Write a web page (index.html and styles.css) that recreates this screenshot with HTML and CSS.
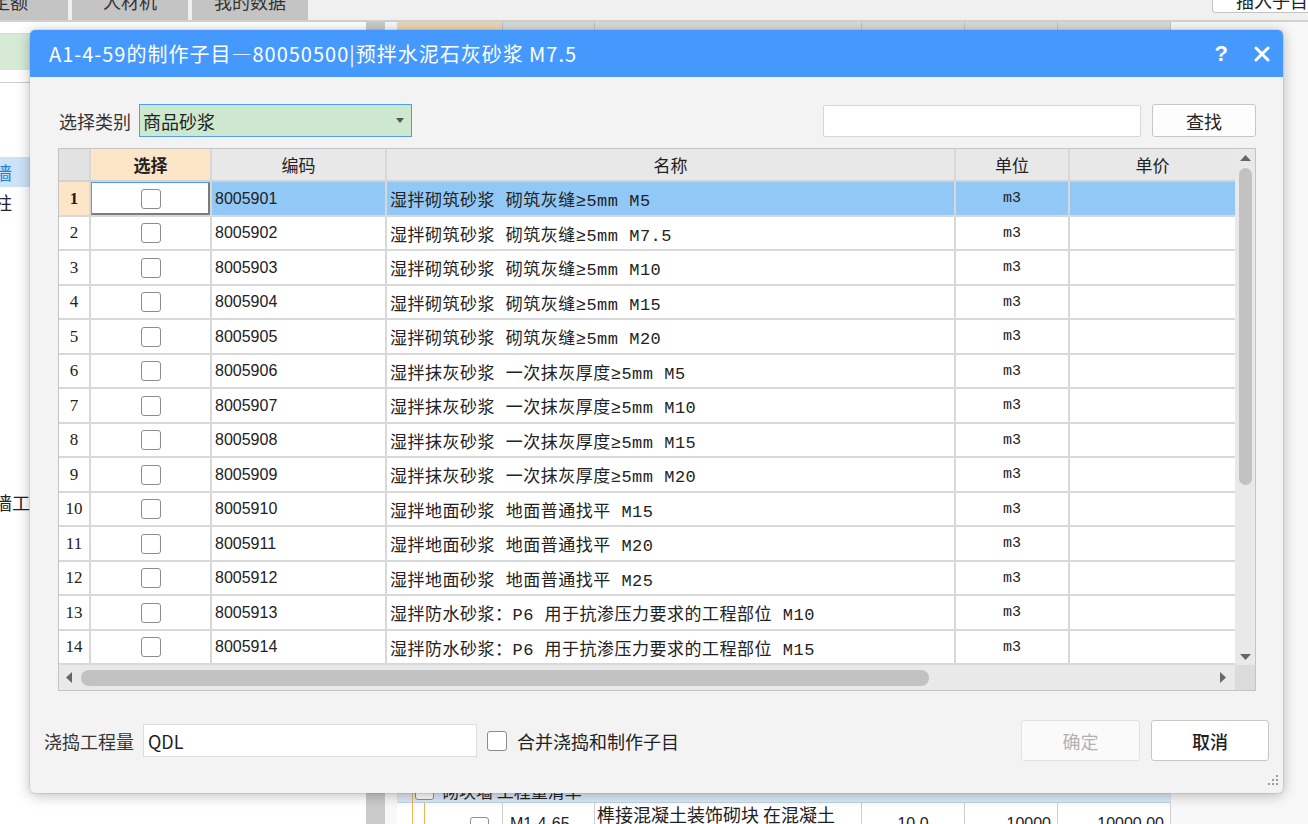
FILE: index.html
```html
<!DOCTYPE html>
<html lang="zh-CN">
<head>
<meta charset="utf-8">
<title>制作子目</title>
<link rel="stylesheet" href="styles.css">
</head>
<body>
<div class="app">
  <div class="tabbar">
    <div class="tab tab-first">定额</div>
    <div class="tab">人材机</div>
    <div class="tab">我的数据</div>
    <div class="insert-btn">插入子目</div>
  </div>
  <div class="main">
    <aside class="left-panel">
      <div class="lp-head"></div>
      <div class="lp-green"></div>
      <div class="lp-tool"></div>
      <ul class="tree">
        <li class="sub"></li>
        <li class="sub"></li>
        <li class="top sel">墙</li>
        <li class="top">柱</li>
        <li class="sub"></li>
        <li class="sub"></li>
        <li class="sub"></li>
        <li class="sub"></li>
        <li class="sub"></li>
        <li class="sub"></li>
        <li class="sub"></li>
        <li class="sub"></li>
        <li class="sub"></li>
        <li class="top">墙工程</li>
      </ul>
    </aside>
    <div class="splitter"></div>
    <section class="right-panel">
      <div class="rp-head">
        <span class="h-first"></span><span></span><span></span><span></span><span></span><span></span>
      </div>
      <div class="rp-filler"></div>
      <div class="rp-group">
        <span class="tline"></span>
        <span class="mini-cb"></span>
        <span class="grp-text">砌块墙 工程量清单</span>
      </div>
      <div class="rp-row">
        <span class="rc rc-tree"><i class="oline"></i><i class="oline second"></i><span class="mini-cb low"></span></span>
        <span class="rc rc-code">M1-4-65</span>
        <span class="rc rc-name">榫接混凝土装饰砌块 在混凝土 砌块墙面上</span>
        <span class="rc rc-num center">10.0</span>
        <span class="rc rc-num">10000</span>
        <span class="rc rc-num">10000.00</span>
      </div>
    </section>
  </div>
</div>

<div class="dialog">
  <div class="dlg-title">
    <h1>A1-4-59的制作子目—80050500|预拌水泥石灰砂浆 M7.5</h1>
    <span class="help">?</span>
    <svg class="close" width="16" height="16" viewBox="0 0 16 16"><path d="M2 2 L14 14 M14 2 L2 14" stroke="#fff" stroke-width="3" stroke-linecap="round"/></svg>
  </div>

  <div class="dlg-body">
    <div class="filter">
      <span class="flabel">选择类别</span>
      <div class="select"><span class="sel-txt">商品砂浆</span><svg width="8" height="5" viewBox="0 0 8 5"><polygon points="0,0 8,0 4,5" fill="#555"/></svg></div>
      <div class="search"></div>
      <div class="btn btn-find">查找</div>
    </div>

    <div class="grid">
      <div class="grid-main">
        <div class="grid-table">
          <div class="row head">
            <div class="c num"></div>
            <div class="c chk hl">选择</div>
            <div class="c ctr">编码</div>
            <div class="c ctr">名称</div>
            <div class="c ctr">单位</div>
            <div class="c ctr last">单价</div>
          </div>
          <div class="row sel">
            <div class="c num">1</div>
            <div class="c chk"><span class="cb"></span></div>
            <div class="c code">8005901</div>
            <div class="c name">湿拌砌筑砂浆 砌筑灰缝≥5mm M5</div>
            <div class="c unit">m3</div>
            <div class="c price last"></div>
          </div>
          <div class="row">
            <div class="c num">2</div>
            <div class="c chk"><span class="cb"></span></div>
            <div class="c code">8005902</div>
            <div class="c name">湿拌砌筑砂浆 砌筑灰缝≥5mm M7.5</div>
            <div class="c unit">m3</div>
            <div class="c price last"></div>
          </div>
          <div class="row">
            <div class="c num">3</div>
            <div class="c chk"><span class="cb"></span></div>
            <div class="c code">8005903</div>
            <div class="c name">湿拌砌筑砂浆 砌筑灰缝≥5mm M10</div>
            <div class="c unit">m3</div>
            <div class="c price last"></div>
          </div>
          <div class="row">
            <div class="c num">4</div>
            <div class="c chk"><span class="cb"></span></div>
            <div class="c code">8005904</div>
            <div class="c name">湿拌砌筑砂浆 砌筑灰缝≥5mm M15</div>
            <div class="c unit">m3</div>
            <div class="c price last"></div>
          </div>
          <div class="row">
            <div class="c num">5</div>
            <div class="c chk"><span class="cb"></span></div>
            <div class="c code">8005905</div>
            <div class="c name">湿拌砌筑砂浆 砌筑灰缝≥5mm M20</div>
            <div class="c unit">m3</div>
            <div class="c price last"></div>
          </div>
          <div class="row">
            <div class="c num">6</div>
            <div class="c chk"><span class="cb"></span></div>
            <div class="c code">8005906</div>
            <div class="c name">湿拌抹灰砂浆 一次抹灰厚度≥5mm M5</div>
            <div class="c unit">m3</div>
            <div class="c price last"></div>
          </div>
          <div class="row">
            <div class="c num">7</div>
            <div class="c chk"><span class="cb"></span></div>
            <div class="c code">8005907</div>
            <div class="c name">湿拌抹灰砂浆 一次抹灰厚度≥5mm M10</div>
            <div class="c unit">m3</div>
            <div class="c price last"></div>
          </div>
          <div class="row">
            <div class="c num">8</div>
            <div class="c chk"><span class="cb"></span></div>
            <div class="c code">8005908</div>
            <div class="c name">湿拌抹灰砂浆 一次抹灰厚度≥5mm M15</div>
            <div class="c unit">m3</div>
            <div class="c price last"></div>
          </div>
          <div class="row">
            <div class="c num">9</div>
            <div class="c chk"><span class="cb"></span></div>
            <div class="c code">8005909</div>
            <div class="c name">湿拌抹灰砂浆 一次抹灰厚度≥5mm M20</div>
            <div class="c unit">m3</div>
            <div class="c price last"></div>
          </div>
          <div class="row">
            <div class="c num">10</div>
            <div class="c chk"><span class="cb"></span></div>
            <div class="c code">8005910</div>
            <div class="c name">湿拌地面砂浆 地面普通找平 M15</div>
            <div class="c unit">m3</div>
            <div class="c price last"></div>
          </div>
          <div class="row">
            <div class="c num">11</div>
            <div class="c chk"><span class="cb"></span></div>
            <div class="c code">8005911</div>
            <div class="c name">湿拌地面砂浆 地面普通找平 M20</div>
            <div class="c unit">m3</div>
            <div class="c price last"></div>
          </div>
          <div class="row">
            <div class="c num">12</div>
            <div class="c chk"><span class="cb"></span></div>
            <div class="c code">8005912</div>
            <div class="c name">湿拌地面砂浆 地面普通找平 M25</div>
            <div class="c unit">m3</div>
            <div class="c price last"></div>
          </div>
          <div class="row">
            <div class="c num">13</div>
            <div class="c chk"><span class="cb"></span></div>
            <div class="c code">8005913</div>
            <div class="c name">湿拌防水砂浆：P6 用于抗渗压力要求的工程部位 M10</div>
            <div class="c unit">m3</div>
            <div class="c price last"></div>
          </div>
          <div class="row">
            <div class="c num">14</div>
            <div class="c chk"><span class="cb"></span></div>
            <div class="c code">8005914</div>
            <div class="c name">湿拌防水砂浆：P6 用于抗渗压力要求的工程部位 M15</div>
            <div class="c unit">m3</div>
            <div class="c price last"></div>
          </div>
        </div>
        <div class="vscroll">
          <div class="arr"><svg width="11" height="6" viewBox="0 0 11 6"><polygon points="0,6 11,6 5.5,0" fill="#666"/></svg></div>
          <div class="vthumb"></div>
          <div class="spacer"></div>
          <div class="arr"><svg width="11" height="6" viewBox="0 0 11 6"><polygon points="0,0 11,0 5.5,6" fill="#666"/></svg></div>
        </div>
      </div>
      <div class="hscroll">
        <div class="harr"><svg width="6" height="11" viewBox="0 0 6 11"><polygon points="6,0 6,11 0,5.5" fill="#666"/></svg></div>
        <div class="hthumb"></div>
        <div class="spacer"></div>
        <div class="harr"><svg width="6" height="11" viewBox="0 0 6 11"><polygon points="0,0 0,11 6,5.5" fill="#666"/></svg></div>
        <div class="corner"></div>
      </div>
    </div>
  </div>

  <div class="dlg-footer">
    <span class="qlabel">浇捣工程量</span>
    <div class="qdl">QDL</div>
    <span class="fcb"></span>
    <span class="merge">合并浇捣和制作子目</span>
    <div class="btn btn-ok">确定</div>
    <div class="btn btn-cancel">取消</div>
  </div>

  <svg class="grip" width="10" height="10" viewBox="0 0 10 10">
    <rect x="8" y="0" width="2" height="2" fill="#9a9a9a"/>
    <rect x="4" y="4" width="2" height="2" fill="#9a9a9a"/>
    <rect x="8" y="4" width="2" height="2" fill="#9a9a9a"/>
    <rect x="0" y="8" width="2" height="2" fill="#9a9a9a"/>
    <rect x="4" y="8" width="2" height="2" fill="#9a9a9a"/>
    <rect x="8" y="8" width="2" height="2" fill="#9a9a9a"/>
  </svg>
</div>
</body>
</html>
```
FILE: styles.css
```css
* { box-sizing: border-box; margin: 0; padding: 0; }
html, body { width: 1308px; height: 824px; overflow: hidden; }
body {
  position: relative;
  background: #fff;
  font-family: "Noto Sans CJK SC", "Noto Sans", sans-serif;
  color: #222;
}

/* ---------- background application ---------- */
.app { display: flex; flex-direction: column; height: 824px; }
.tabbar {
  height: 22px; flex: none; display: flex;
  background: #f0f0f0; border-bottom: 2px solid #d2d2d2; overflow: hidden;
}
.tab {
  flex: none; width: 116px; height: 20px; margin-right: 4px;
  background: #c4c4c4; font-size: 18px; line-height: 2px;
  text-align: center; color: #333; white-space: nowrap;
}
.tab-first { margin-left: -48px; }
.insert-btn {
  flex: none; margin-left: auto; margin-right: -14px;
  width: 110px; height: 13px; background: #fff;
  border: 1px solid #c3c3c3; border-top: none; border-radius: 0 0 4px 4px;
  font-size: 18px; line-height: 0; padding-left: 23px; color: #222; white-space: nowrap;
}
.main { flex: 1; display: flex; min-height: 0; }
.left-panel {
  width: 366px; flex: none; background: #fff;
  display: flex; flex-direction: column; overflow: hidden;
}
.lp-head { height: 12px; flex: none; border-bottom: 1px solid #d8d8d8; }
.lp-green { height: 36px; flex: none; background: #d6ead6; }
.lp-tool { height: 13px; flex: none; border-bottom: 1px solid #cfcfcf; }
.tree { list-style: none; padding-top: 14px; }
.tree li { height: 30px; line-height: 30px; font-size: 18px; white-space: nowrap; }
.tree .top { text-indent: -6px; }
.tree .sub { padding-left: 70px; }
.tree .sel { background: #cde4f8; color: #1d7fd7; }

.splitter { width: 19px; flex: none; background: #cbcbcb; }
.right-panel {
  flex: 1; min-width: 0; display: flex; flex-direction: column;
  padding-left: 12px; background: #f8f8f8; overflow: hidden;
}
.rp-head, .rp-row {
  display: grid; flex: none; width: 774px;
  grid-template-columns: 106px 92px 267px 103px 93px 113px;
}
.rp-head { height: 24px; background: #dadada; }
.rp-head span { border-right: 1px solid #c2c2c2; }
.rp-head .h-first { background: #ecd7b8; }
.rp-filler { height: 732px; flex: none; width: 774px; background: #fff; }
.rp-group {
  height: 25px; width: 774px; flex: none; display: flex; align-items: center;
  background: #dceaf7; border-bottom: 1px solid #bed3e6;
}
.tline { width: 1px; height: 25px; background: #f1b25a; margin-left: 15px; }
.mini-cb {
  width: 19px; height: 19px; border: 1px solid #8f8f8f; border-radius: 3px;
  background: #fff; margin-left: 2px; flex: none;
}
.grp-text { margin-left: 8px; font-size: 17px; }
.rp-row { height: 50px; background: #fff; border-bottom: 1px solid #d0d0d0; }
.rc {
  border-right: 1px solid #d0d0d0; overflow: hidden;
  font-size: 16px; font-family: "Liberation Sans", "Noto Sans CJK SC", sans-serif;
  display: flex; align-items: center;
}
.rc-tree { align-items: flex-start; }
.oline { display: block; width: 1px; height: 50px; background: #f1b25a; margin-left: 15px; }
.oline.second { margin-left: 11px; }
.mini-cb.low { margin-left: 45px; margin-top: 14px; }
.rc-code { padding-left: 7px; padding-bottom: 8px; }
.rc-name {
  display: block; font-family: "Noto Sans CJK SC", sans-serif; font-size: 18px;
  line-height: 21px; padding: 1px 12px 0 2px;
}
.rc-num { justify-content: flex-end; padding-right: 6px; padding-bottom: 8px; }
.rc-num.center { justify-content: center; padding-right: 0; }

/* ---------- dialog ---------- */
.dialog {
  position: absolute; left: 30px; top: 30px; width: 1253px; height: 763px;
  background: #f3f3f3; border-radius: 5px;
  box-shadow: 0 0 0 1px rgba(0,0,0,.07), 0 2px 14px rgba(0,0,0,.28);
  display: flex; flex-direction: column;
}
.dlg-title {
  height: 47px; flex: none; background: #4599fd; border-radius: 5px 5px 0 0;
  display: flex; align-items: center; padding: 0 13px 0 19px; color: #fff;
}
.dlg-title h1 {
  flex: 1; font-size: 20px; font-weight: 400; letter-spacing: 1px; white-space: nowrap;
}
.help {
  font-family: "Liberation Sans", sans-serif; font-size: 22px; font-weight: 700;
  margin-right: 26px; line-height: 1;
}
.close { display: block; }

.dlg-body { flex: none; padding: 27px 27px 0 28px; }
.filter { display: flex; align-items: center; height: 33px; margin-bottom: 11px; }
.flabel { width: 81px; font-size: 18px; color: #333; padding-left: 1px; }
.select {
  width: 273px; height: 33px; background: #cde8cf; border: 1px solid #4d9ef2;
  display: flex; align-items: center; padding: 0 7px 0 3px; font-size: 18px;
}
.sel-txt { flex: 1; }
.search {
  margin-left: auto; width: 318px; height: 32px; background: #fff;
  border: 1px solid #d6d6d6; border-radius: 2px;
}
.btn {
  display: flex; align-items: center; justify-content: center;
  border-radius: 3px; font-size: 18px; flex: none;
}
.btn-find {
  margin-left: 11px; width: 104px; height: 33px;
  border: 1px solid #c6c6c6; background: #fdfdfd;
}

.grid {
  height: 543px; border: 1px solid #c4c4c4; background: #fff;
  display: flex; flex-direction: column;
}
.grid-main { display: flex; height: 516px; flex: none; }
.grid-table { flex: 1; min-width: 0; }
.row {
  display: grid; grid-template-columns: 32px 121px 175px 569px 114px 1fr;
  border-bottom: 2px solid #d8d8d8; height: 34px;
}
.row:nth-child(even) { height: 35px; }
.row.head { height: 33px; background: #e8e8e8; border-bottom-color: #d2d2d2; }
.c {
  border-right: 2px solid #d8d8d8; display: flex; align-items: center;
  overflow: hidden; white-space: nowrap;
}
.c.last { border-right: none; }
.head .c { font-size: 17px; color: #222; }
.head .num { background: #e2e2e2; }
.head .hl { background: #fde5c7; font-weight: 700; }
.ctr, .chk { justify-content: center; }
.num {
  justify-content: center; font-family: "Liberation Serif", serif; font-size: 17px; color: #222;
}
.code { padding-left: 3px; font-family: "Liberation Sans", sans-serif; font-size: 16px; color: #222; }
.name {
  padding-left: 3px; font-family: "Liberation Mono", "Noto Sans CJK SC", monospace;
  font-size: 17px; letter-spacing: .5px; color: #222;
}
.unit {
  justify-content: center; font-family: "Liberation Mono", monospace; font-size: 15px; color: #222;
}
.cb {
  width: 20px; height: 20px; border: 1px solid #8c8c8c; border-radius: 3px; background: #fff;
}
.row.sel .code, .row.sel .name, .row.sel .unit, .row.sel .price { background: #91c8f5; }
.row.sel .num { background: #fde5c7; font-weight: 700; }
.row.sel .chk { box-shadow: inset 1px 1px 0 #4a9ff5, inset -2px -2px 0 #7c7c7c; background: #fff; }

.vscroll {
  width: 20px; flex: none; background: #e9e9e9;
  display: flex; flex-direction: column; align-items: center;
}
.arr { height: 17px; width: 20px; display: flex; align-items: center; justify-content: center; flex: none; }
.vthumb { width: 13px; height: 317px; margin-top: 2px; border-radius: 7px; background: #c2c2c2; flex: none; }
.spacer { flex: 1; }
.hscroll {
  height: 25px; flex: none; display: flex; align-items: center; background: #e9e9e9;
}
.harr { width: 20px; height: 25px; display: flex; align-items: center; justify-content: center; flex: none; }
.hthumb { width: 848px; height: 16px; margin-left: 2px; border-radius: 8px; background: #c2c2c2; flex: none; }
.corner { width: 20px; height: 25px; margin-left: 2px; background: #dcdcdc; flex: none; }

.dlg-footer {
  display: flex; align-items: center; height: 41px; margin-top: 29px; padding: 0 14px; flex: none;
}
.qlabel { width: 99px; font-size: 18px; color: #333; }
.qdl {
  width: 334px; height: 33px; background: #fff; border: 1px solid #dcdcdc;
  font-size: 18px; padding-left: 4px; display: flex; align-items: center; color: #222;
}
.fcb {
  width: 20px; height: 20px; margin-left: 10px; border: 1px solid #8c8c8c;
  border-radius: 3px; background: #fff; flex: none;
}
.merge { margin-left: 10px; font-size: 18px; color: #222; }
.btn-ok {
  margin-left: auto; width: 119px; height: 41px;
  border: 1px solid #e2e2e2; background: #fafafa; color: #b2b2b2;
}
.btn-cancel {
  margin-left: 11px; width: 118px; height: 41px;
  border: 1px solid #c8c8c8; background: #fff; color: #1e1e1e; font-weight: 500;
}
.grip { position: absolute; right: 5px; bottom: 8px; }
```
